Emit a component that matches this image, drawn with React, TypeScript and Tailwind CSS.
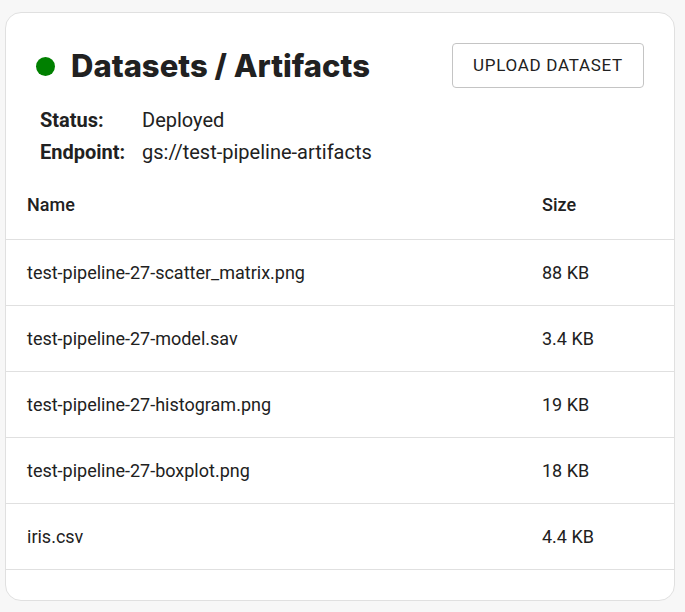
import React from "react";

const rows = [
  { name: "test-pipeline-27-scatter_matrix.png", size: "88 KB" },
  { name: "test-pipeline-27-model.sav", size: "3.4 KB" },
  { name: "test-pipeline-27-histogram.png", size: "19 KB" },
  { name: "test-pipeline-27-boxplot.png", size: "18 KB" },
  { name: "iris.csv", size: "4.4 KB" },
];

export default function App() {
  return (
    <div className="min-h-[612px] w-[685px] bg-[#f7f7f7] pt-[12px] pl-[5px] font-['Roboto',sans-serif] text-[#212121]">
      <div className="w-[670px] h-[589px] bg-white border border-[#e0e0e0] rounded-[16px] overflow-hidden">
        <div className="flex items-start justify-between pl-[30px] pr-[30px] pt-[30px]">
          <div className="flex items-center gap-[16px] pt-[3px]">
            <span className="block w-[19px] h-[19px] rounded-full bg-[#008000]" />
            <h1 className="font-['Inter',sans-serif] font-extrabold text-[31px] leading-[40px] text-[#212121]">
              Datasets / Artifacts
            </h1>
          </div>
          <button className="h-[45px] w-[192px] border border-[#c4c4c4] rounded-[4px] text-[17px] font-normal tracking-[0.7px] text-[#212121] bg-white">
            UPLOAD DATASET
          </button>
        </div>
        <div className="pl-[34px] mt-[16px] text-[20px] leading-[32px]">
          <div className="flex">
            <span className="w-[102px] font-bold">Status:</span>
            <span>Deployed</span>
          </div>
          <div className="flex">
            <span className="w-[102px] font-bold">Endpoint:</span>
            <span>gs://test-pipeline-artifacts</span>
          </div>
        </div>
        <div className="mt-[2px] text-[18px]">
          <div className="flex h-[70px] items-center border-b border-[#e0e0e0] font-medium">
            <div className="w-[520px] pl-[21px]">Name</div>
            <div className="pl-[16px]">Size</div>
          </div>
          {rows.map((r) => (
            <div key={r.name} className="flex h-[66px] items-center border-b border-[#e0e0e0]">
              <div className="w-[520px] pl-[21px]">{r.name}</div>
              <div className="pl-[16px]">{r.size}</div>
            </div>
          ))}
        </div>
      </div>
    </div>
  );
}
